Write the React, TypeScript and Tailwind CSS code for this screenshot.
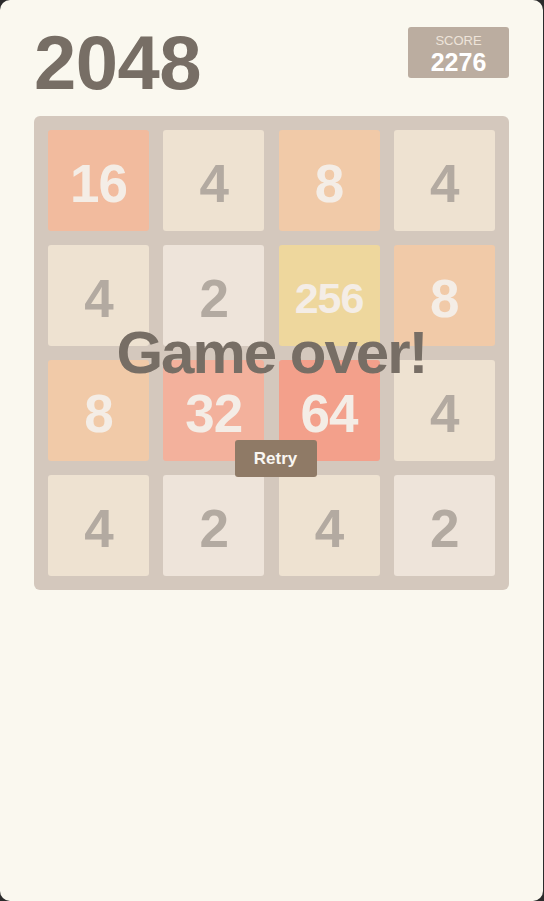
import React from "react";

type Tile = { v: number; bg: string; fg: string };

const colors: Record<number, { bg: string; fg: string }> = {
  2: { bg: "bg-[#eee4da]", fg: "text-[#b3aaa1]" },
  4: { bg: "bg-[#eee2d1]", fg: "text-[#b3aaa1]" },
  8: { bg: "bg-[#f1caa8]", fg: "text-[#f4ede6]" },
  16: { bg: "bg-[#f2bb9e]", fg: "text-[#f4ede6]" },
  32: { bg: "bg-[#f3b19c]", fg: "text-[#f4ede6]" },
  64: { bg: "bg-[#f3a08b]", fg: "text-[#f4ede6]" },
  256: { bg: "bg-[#eed79d]", fg: "text-[#f4ede6]" },
};

const grid = [16, 4, 8, 4, 4, 2, 256, 8, 8, 32, 64, 4, 4, 2, 4, 2];

export default function App() {
  const tiles: Tile[] = grid.map((v) => ({ v, ...colors[v] }));
  return (
    <div className="h-[901px] w-[544px] bg-[#2b2b2b] overflow-hidden" style={{ fontFamily: '"Liberation Sans", Arial, sans-serif' }}>
      <div className="h-[901px] w-[543px] bg-[#faf8ef] rounded-[10px]">
        <div className="ml-[34px] w-[475px]">
          <div className="h-[116px] flex justify-between items-start">
            <h1 className="pt-[25px] text-[76px] leading-none font-bold text-[#776e65] tracking-[-0.5px]">2048</h1>
            <div className="mt-[27px] w-[101px] h-[51px] rounded-[3px] bg-[#bbada0] flex flex-col items-center pt-[7px]">
              <div className="text-[13px] leading-[13px] text-[#eee4da]">SCORE</div>
              <div className="mt-[3px] text-[25px] leading-[25px] font-bold text-white">2276</div>
            </div>
          </div>
          <div className="relative w-[475px] h-[474px] rounded-[6px] bg-[#d4c8bd] p-[14px] grid grid-cols-4 gap-[14px]">
            {tiles.map((t, i) => (
              <div
                key={i}
                className={`w-[101px] h-[101px] rounded-[3px] flex items-center justify-center pt-[6px] font-bold ${t.bg} ${t.fg} ${
                  t.v >= 100 ? "text-[43px] tracking-[-1px]" : "text-[53px] tracking-[-1px]"
                }`}
              >
                {t.v}
              </div>
            ))}
            <div className="absolute inset-0 flex flex-col items-center">
              <p className="mt-[207px] h-[60px] text-[60px] leading-[60px] font-bold text-[#776e65] tracking-[-2px]">Game over!</p>
              <button className="mt-[57px] ml-[8px] w-[82px] h-[37px] rounded-[3px] bg-[#8f7a66] text-[17px] font-bold text-[#f9f6f2]">Retry</button>
            </div>
          </div>
        </div>
      </div>
    </div>
  );
}
